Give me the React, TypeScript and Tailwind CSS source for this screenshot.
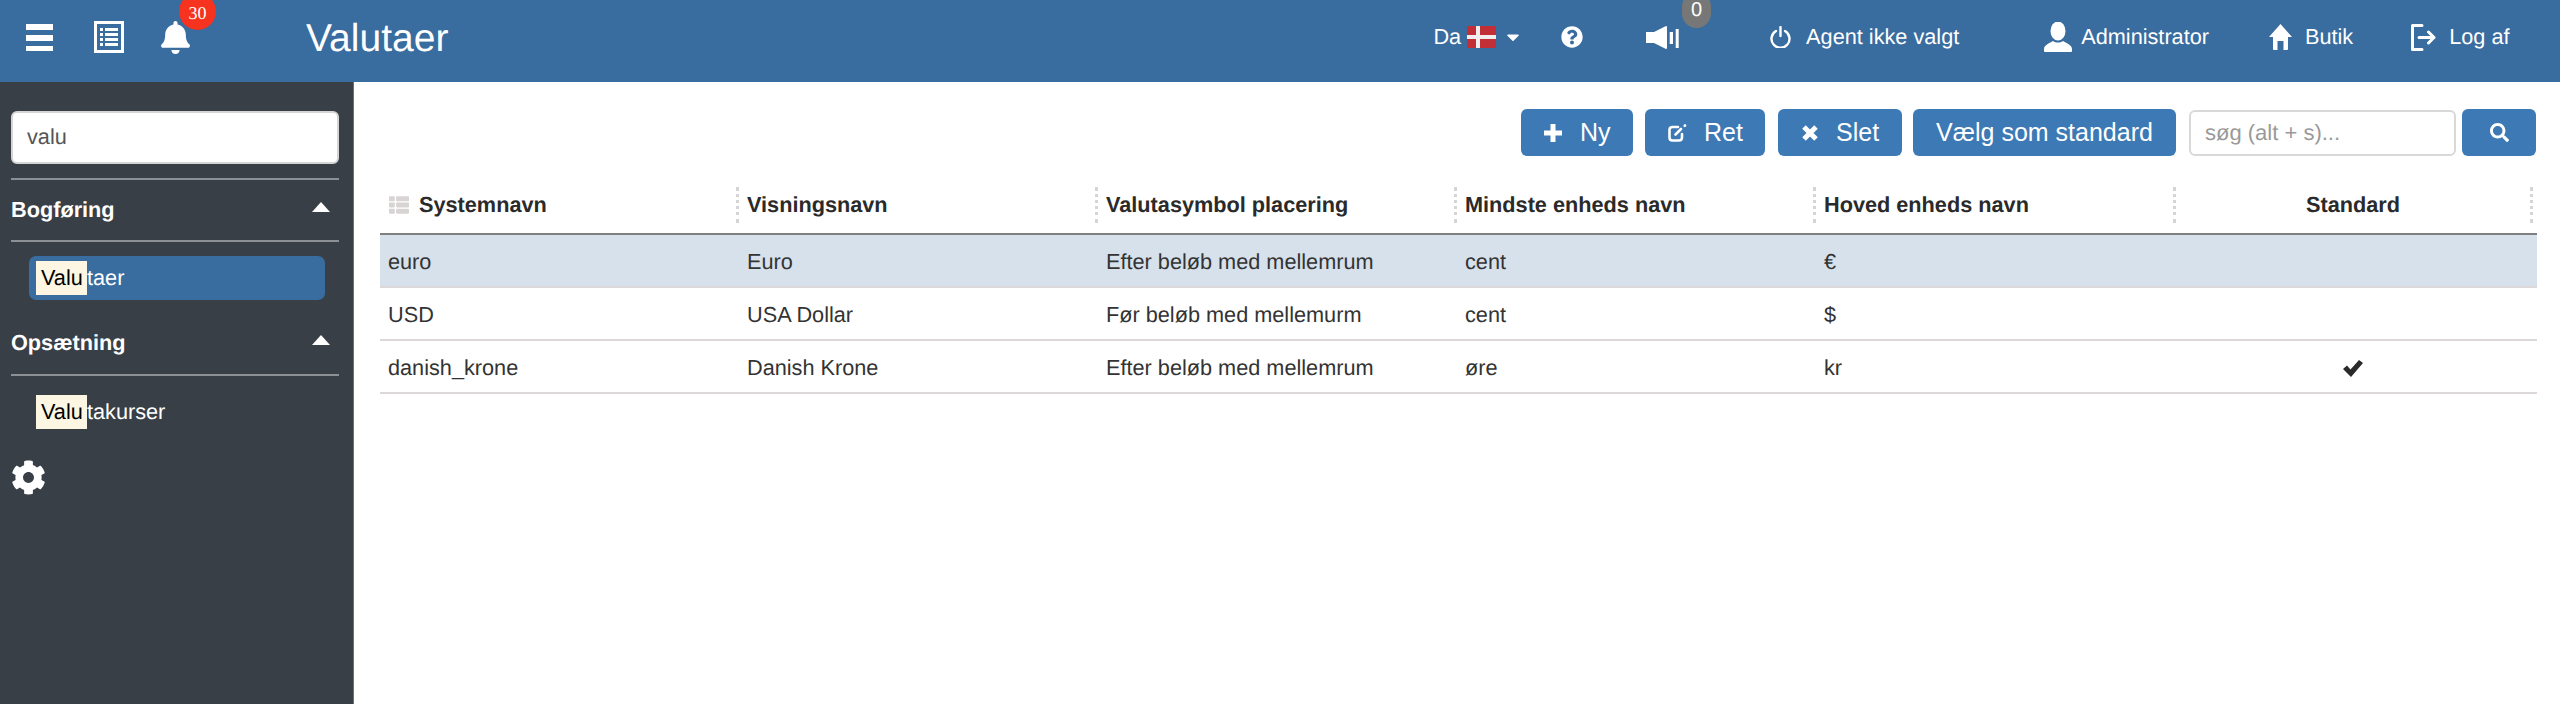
import { FaCaretDown, FaCog, FaQuestionCircle, FaSearch, FaThList, FaBell } from 'react-icons/fa';

const columns = [
  { label: 'Systemnavn', width: 'w-[359px]' },
  { label: 'Visningsnavn', width: 'w-[359px]' },
  { label: 'Valutasymbol placering', width: 'w-[359px]' },
  { label: 'Mindste enheds navn', width: 'w-[359px]' },
  { label: 'Hoved enheds navn', width: 'w-[360px]' },
  { label: 'Standard', width: 'w-[361px]' },
];

const rows = [
  { system: 'euro', name: 'Euro', placement: 'Efter beløb med mellemrum', minor: 'cent', major: '€', isDefault: false },
  { system: 'USD', name: 'USA Dollar', placement: 'Før beløb med mellemurm', minor: 'cent', major: '$', isDefault: false },
  { system: 'danish_krone', name: 'Danish Krone', placement: 'Efter beløb med mellemrum', minor: 'øre', major: 'kr', isDefault: true },
];

function Header() {
  return (
    <header className="h-[82px] shrink-0 bg-[#396c9f] flex items-center pb-[8px] text-white text-[21.7px] overflow-hidden">
      <svg viewBox="0 0 27 27" className="w-[27px] h-[27px] ml-[26px] shrink-0" fill="white">
        <rect width="27" height="6" />
        <rect y="11" width="27" height="6" />
        <rect y="22" width="27" height="5" />
      </svg>
      <svg viewBox="0 0 30 32" className="w-[30px] h-[32px] ml-[41px] shrink-0" fill="white">
        <path fillRule="evenodd" d="M0 0h30v32H0zM3 3v26h24V3z" />
        <path d="M6 7h3v3H6zM11 7h13v3H11zM6 12h3v3H6zM11 12h13v3H11zM6 17h3v3H6zM11 17h13v3H11zM6 22h3v3H6zM11 22h13v3H11z" />
      </svg>
      <div className="relative ml-[37px] shrink-0">
        <FaBell className="w-[29px] h-[33px]" />
        <span className="absolute left-[18px] top-[-28px] w-[37px] h-[37px] rounded-full bg-[#f5331f] flex items-center justify-center pt-[4px] text-[18px] font-['Liberation_Serif',serif]">30</span>
      </div>
      <h1 className="text-[39px] ml-[116px] mt-[5px] font-normal">Valutaer</h1>

      <span className="ml-[985px]">Da</span>
      <svg viewBox="0 0 29 22" className="w-[29px] h-[22px] ml-[6px] shrink-0">
        <rect width="29" height="22" fill="#c22f36" />
        <rect x="9" width="4" height="22" fill="#f3eeee" />
        <rect y="9" width="29" height="4" fill="#f3eeee" />
      </svg>
      <FaCaretDown className="w-[14px] h-[20px] ml-[10px] shrink-0" />
      <FaQuestionCircle className="w-[22px] h-[22px] ml-[41px] shrink-0" />
      <div className="relative ml-[63px] shrink-0">
        <svg viewBox="0 0 33 23" className="w-[33px] h-[23px]" fill="white">
          <path d="M0 6h8L20 0q1 0 1 1v21q0 1-1 1L8 17H0z" />
          <rect x="23.7" y="6" width="3.3" height="12" />
          <rect x="29.7" y="3" width="3" height="19" />
        </svg>
        <span className="absolute left-[36px] top-[-34px] w-[29px] h-[36px] rounded-full bg-[#777777] flex items-center justify-center text-[20px]">0</span>
      </div>
      <svg viewBox="0 0 21 22" className="w-[21px] h-[22px] ml-[91px] shrink-0" fill="none" stroke="white" strokeWidth="2.4" strokeLinecap="round">
        <path d="M6 5a9 9 0 1 0 9 0" />
        <path d="M10.5 1v9" />
      </svg>
      <span className="ml-[15px]">Agent ikke valgt</span>
      <svg viewBox="0 0 28 30" className="w-[28px] h-[30px] ml-[85px] shrink-0" fill="white">
        <ellipse cx="14" cy="9" rx="7.5" ry="9.5" />
        <path d="M1 30q-1 0-1-1v-2c0-4 6-6 9-8 3 2 7 2 10 0 3 2 9 4 9 8v2q0 1-1 1z" />
      </svg>
      <span className="ml-[9px]">Administrator</span>
      <svg viewBox="0 0 23 26" className="w-[23px] h-[26px] ml-[60px] shrink-0" fill="white">
        <path d="M11.5 0L23 13h-4v12q0 1-1 1h-3.500v-9h-6v9H5q-1 0-1-1V13H0z" />
      </svg>
      <span className="ml-[13px]">Butik</span>
      <svg viewBox="0 0 25 27" className="w-[25px] h-[27px] ml-[58px] shrink-0" fill="none" stroke="white" strokeWidth="3" strokeLinecap="round" strokeLinejoin="round">
        <path d="M11 1.500H1.500v24H11" />
        <path d="M8 13.500h15M17.500 8l5.500 5.500-5.500 5.500" />
      </svg>
      <span className="ml-[13px]">Log af</span>
    </header>
  );
}

function Highlight() {
  return <span className="inline-block bg-[#fdf6e3] text-black h-[34px] w-[51px] pl-[5px] leading-[34px]">Valu</span>;
}

function SectionTitle({ title }: { title: string }) {
  return (
    <div className="flex items-center justify-between h-[60px] pr-[9px] font-bold text-white text-[21.7px]">
      <span>{title}</span>
      <svg viewBox="0 0 18 10" className="w-[18px] h-[10px] mb-[6px]" fill="white">
        <path d="M9 0l9 10H0z" />
      </svg>
    </div>
  );
}

function Sidebar() {
  return (
    <aside className="w-[354px] shrink-0 bg-[#383f47] border-r border-[#6b7177] pl-[11px] pr-[14px] pt-[29px] text-[21.7px] text-white">
      <div className="h-[53px] w-[328px] rounded-[6px] bg-white border-2 border-[#d5d5d5] flex items-center pl-[14px] text-[#555555]">valu</div>
      <div className="mt-[14px] border-t-2 border-[#8c9095]" />
      <SectionTitle title="Bogføring" />
      <div className="border-t-2 border-[#8c9095]" />
      <div className="mt-[14px] ml-[18px] w-[296px] h-[44px] rounded-[7px] bg-[#396c9f] pl-[7px] pt-[5px] flex items-start">
        <Highlight />
        <span className="leading-[34px]">taer</span>
      </div>
      <div className="mt-[13px]">
        <SectionTitle title="Opsætning" />
      </div>
      <div className="border-t-2 border-[#8c9095] mt-[1px]" />
      <div className="mt-[19px] ml-[25px] flex">
        <Highlight />
        <span className="leading-[34px]">takurser</span>
      </div>
      <FaCog className="w-[35px] h-[35px] mt-[31px]" />
    </aside>
  );
}

function Toolbar() {
  const button = 'h-[47px] rounded-[6px] bg-[#3d79b4] text-white flex items-center text-[25px] shrink-0';
  return (
    <div className="flex justify-end items-center h-[47px] pr-[12px]">
      <button className={`${button} w-[112px] mr-[12px] pl-[23px]`}>
        <svg viewBox="0 0 18 18" className="w-[18px] h-[18px] mr-[18px]" fill="white">
          <path d="M6.500 0h5v6.500H18v5h-6.500V18h-5v-6.500H0v-5h6.500z" />
        </svg>
        Ny
      </button>
      <button className={`${button} w-[120px] mr-[13px] pl-[23px]`}>
        <svg viewBox="0 0 19 18" className="w-[19px] h-[18px] mr-[17px]" fill="none" stroke="white" strokeWidth="2.600" strokeLinecap="round">
          <path d="M10 3H4.500Q1.500 3 1.500 6v7.500q0 3 3 3H11q3 0 3-3V10" />
          <path d="M7.500 10.500L13 5" />
          <path d="M17 1.500l-.3.300" />
        </svg>
        Ret
      </button>
      <button className={`${button} w-[124px] mr-[11px] pl-[24px]`}>
        <svg viewBox="0 0 16 16" className="w-[16px] h-[16px] mr-[18px]" fill="none" stroke="white" strokeWidth="5">
          <path d="M2 2l12 12M14 2L2 14" />
        </svg>
        Slet
      </button>
      <button className={`${button} w-[263px] mr-[13px] justify-center`}>Vælg som standard</button>
      <div className="w-[267px] h-[46px] rounded-[6px] border-2 border-[#d8d8d8] bg-white flex items-center pl-[14px] text-[22px] text-[#999999] mr-[6px]">søg (alt + s)...</div>
      <button className={`${button} w-[74px] justify-center`}>
        <FaSearch className="w-[19px] h-[19px]" />
      </button>
    </div>
  );
}

function CurrencyTable() {
  return (
    <table className="mt-[31px] w-[2157px] table-fixed border-collapse text-[21.7px] text-[#333333]">
      <thead>
        <tr className="h-[46px] border-b-2 border-[#808080]">
          {columns.map((col, i) => (
            <th key={col.label} className={`${col.width} p-0 pb-[10px] font-bold text-[#2a2a2a] align-middle ${i === 5 ? 'text-center' : 'text-left'}`}>
              <div className={`flex items-center h-[36px] border-r-[3px] border-dotted border-[#d5d5d5] ${i === 5 ? 'mr-[4px]' : ''}`}>
                <div className={`flex items-center pl-[8px] ${i === 5 ? 'w-full justify-center pr-[8px]' : ''}`}>
                  {i === 0 && <FaThList className="w-[22px] h-[20px] mr-[9px] text-[#d8d4d4]" />}
                  {col.label}
                </div>
              </div>
            </th>
          ))}
        </tr>
      </thead>
      <tbody>
        {rows.map((row, i) => (
          <tr key={row.system} className={`h-[53px] border-b-2 border-[#dcd8d8] ${i === 0 ? 'bg-[#d7e1ec]' : ''}`}>
            <td className="p-0 pl-[8px] pt-[4px]">{row.system}</td>
            <td className="p-0 pl-[8px] pt-[4px]">{row.name}</td>
            <td className="p-0 pl-[8px] pt-[4px]">{row.placement}</td>
            <td className="p-0 pl-[8px] pt-[4px]">{row.minor}</td>
            <td className="p-0 pl-[8px] pt-[4px]">{row.major}</td>
            <td className="p-0 pt-[4px] pr-[7px]">
              {row.isDefault && (
                <svg viewBox="0 0 20 17" className="w-[20px] h-[17px] mx-auto" fill="#2a2a2a">
                  <path d="M0 9l4-3.500 3.500 4L16 0l4 3L8 17z" />
                </svg>
              )}
            </td>
          </tr>
        ))}
      </tbody>
    </table>
  );
}

export default function App() {
  return (
    <div className="h-screen flex flex-col overflow-hidden bg-white font-['Liberation_Sans',Arial,sans-serif] [text-rendering:geometricPrecision]">
      <Header />
      <div className="flex flex-1 min-h-0">
        <Sidebar />
        <main className="flex-1 pl-[26px] pt-[27px] pr-[12px]">
          <Toolbar />
          <CurrencyTable />
        </main>
      </div>
    </div>
  );
}
